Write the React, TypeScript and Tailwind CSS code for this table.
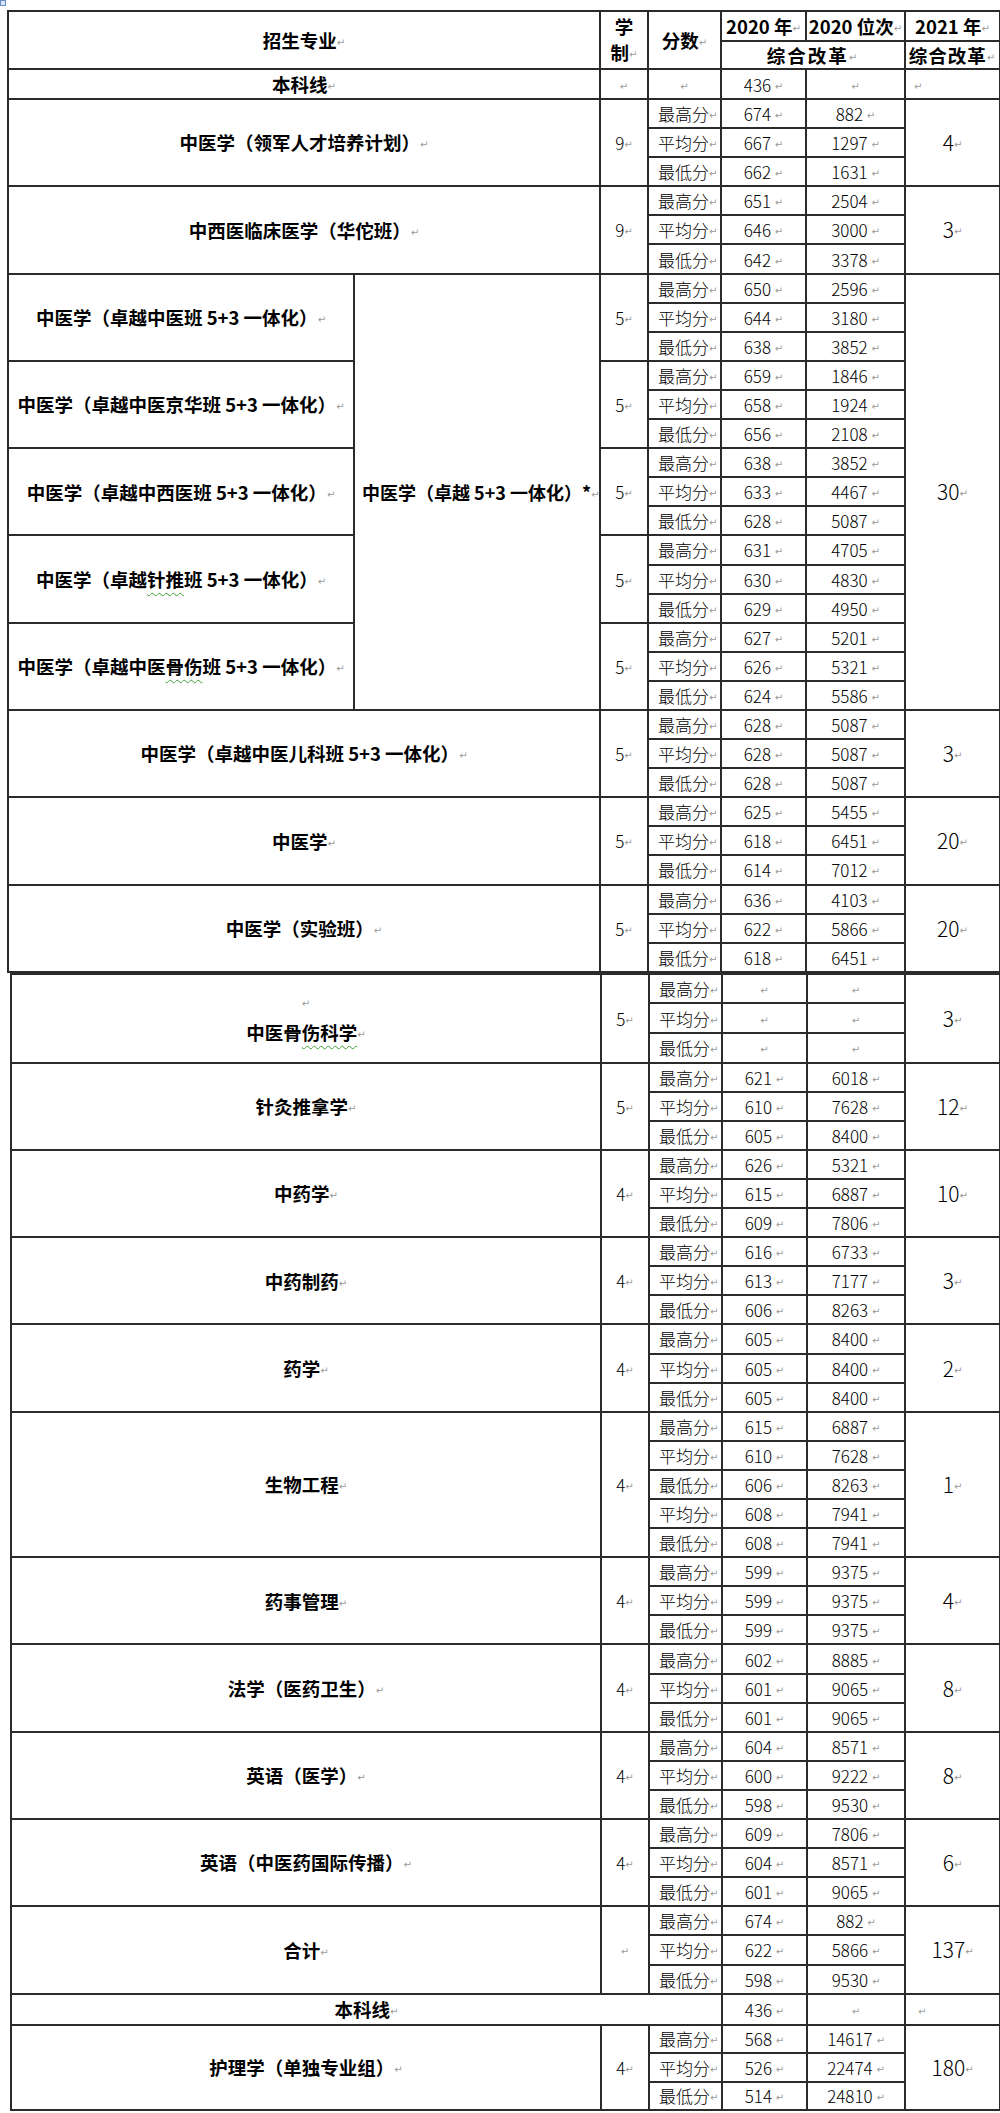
import React from 'react'

type Sub = [string, string, string]

interface Group {
  name: React.ReactNode
  years: string
  subs: Sub[]
  plan?: string
}

const Ret = () => (
  <span className="font-['DejaVu_Sans',sans-serif] text-[10px] font-normal text-[#9a9a9a] align-middle">↵</span>
)

const Wavy = ({ children }: { children: React.ReactNode }) => (
  <span className="underline decoration-wavy decoration-[#3f9c35] decoration-1 underline-offset-[5px]">{children}</span>
)

const td = 'border-2 border-[#2b2b2b] p-0 align-middle'
const head = "text-[18.5px] font-bold text-black whitespace-nowrap"
const data = 'text-[17px] font-light'

const same = (a: string, b: string): Sub[] => [
  ['最高分', a, b],
  ['平均分', a, b],
  ['最低分', a, b],
]

const firstGroups: Group[] = [
  {
    name: '中医学（领军人才培养计划）',
    years: '9',
    subs: [['最高分', '674', '882'], ['平均分', '667', '1297'], ['最低分', '662', '1631']],
    plan: '4',
  },
  {
    name: '中西医临床医学（华佗班）',
    years: '9',
    subs: [['最高分', '651', '2504'], ['平均分', '646', '3000'], ['最低分', '642', '3378']],
    plan: '3',
  },
]

const eliteGroups: Group[] = [
  {
    name: '中医学（卓越中医班 5+3 一体化）',
    years: '5',
    subs: [['最高分', '650', '2596'], ['平均分', '644', '3180'], ['最低分', '638', '3852']],
  },
  {
    name: '中医学（卓越中医京华班 5+3 一体化）',
    years: '5',
    subs: [['最高分', '659', '1846'], ['平均分', '658', '1924'], ['最低分', '656', '2108']],
  },
  {
    name: '中医学（卓越中西医班 5+3 一体化）',
    years: '5',
    subs: [['最高分', '638', '3852'], ['平均分', '633', '4467'], ['最低分', '628', '5087']],
  },
  {
    name: <>中医学（卓越<Wavy>针推</Wavy>班 5+3 一体化）</>,
    years: '5',
    subs: [['最高分', '631', '4705'], ['平均分', '630', '4830'], ['最低分', '629', '4950']],
  },
  {
    name: <>中医学（卓越中医<Wavy>骨伤</Wavy>班 5+3 一体化）</>,
    years: '5',
    subs: [['最高分', '627', '5201'], ['平均分', '626', '5321'], ['最低分', '624', '5586']],
  },
]

const laterGroups: Group[] = [
  {
    name: '中医学（卓越中医儿科班 5+3 一体化）',
    years: '5',
    subs: same('628', '5087'),
    plan: '3',
  },
  {
    name: '中医学',
    years: '5',
    subs: [['最高分', '625', '5455'], ['平均分', '618', '6451'], ['最低分', '614', '7012']],
    plan: '20',
  },
  {
    name: '中医学（实验班）',
    years: '5',
    subs: [['最高分', '636', '4103'], ['平均分', '622', '5866'], ['最低分', '618', '6451']],
    plan: '20',
  },
]

const secondGroups: Group[] = [
  {
    name: '针灸推拿学',
    years: '5',
    subs: [['最高分', '621', '6018'], ['平均分', '610', '7628'], ['最低分', '605', '8400']],
    plan: '12',
  },
  {
    name: '中药学',
    years: '4',
    subs: [['最高分', '626', '5321'], ['平均分', '615', '6887'], ['最低分', '609', '7806']],
    plan: '10',
  },
  {
    name: '中药制药',
    years: '4',
    subs: [['最高分', '616', '6733'], ['平均分', '613', '7177'], ['最低分', '606', '8263']],
    plan: '3',
  },
  { name: '药学', years: '4', subs: same('605', '8400'), plan: '2' },
  {
    name: '生物工程',
    years: '4',
    subs: [
      ['最高分', '615', '6887'],
      ['平均分', '610', '7628'],
      ['最低分', '606', '8263'],
      ['平均分', '608', '7941'],
      ['最低分', '608', '7941'],
    ],
    plan: '1',
  },
  { name: '药事管理', years: '4', subs: same('599', '9375'), plan: '4' },
  {
    name: '法学（医药卫生）',
    years: '4',
    subs: [['最高分', '602', '8885'], ['平均分', '601', '9065'], ['最低分', '601', '9065']],
    plan: '8',
  },
  {
    name: '英语（医学）',
    years: '4',
    subs: [['最高分', '604', '8571'], ['平均分', '600', '9222'], ['最低分', '598', '9530']],
    plan: '8',
  },
  {
    name: '英语（中医药国际传播）',
    years: '4',
    subs: [['最高分', '609', '7806'], ['平均分', '604', '8571'], ['最低分', '601', '9065']],
    plan: '6',
  },
  {
    name: '合计',
    years: '',
    subs: [['最高分', '674', '882'], ['平均分', '622', '5866'], ['最低分', '598', '9530']],
    plan: '137',
  },
]

function SubCells({ sub }: { sub: Sub }) {
  return (
    <>
      <td className={`${td} pl-[9px] text-left ${data} whitespace-nowrap overflow-hidden`}>
        {sub[0]}
        <Ret />
      </td>
      <td className={`${td} text-center ${data} whitespace-nowrap`}>
        {sub[1] ? <>{sub[1]} </> : null}
        <Ret />
      </td>
      <td className={`${td} text-center ${data} whitespace-nowrap`}>
        {sub[2] ? <>{sub[2]} </> : null}
        <Ret />
      </td>
    </>
  )
}

function YearsCell({ years, span }: { years: string; span: number }) {
  return (
    <td rowSpan={span} className={`${td} text-center ${data}`}>
      {years}
      <Ret />
    </td>
  )
}

function PlanCell({ plan, span }: { plan: string; span: number }) {
  return (
    <td rowSpan={span} className={`${td} text-center text-[21px] font-light`}>
      {plan}
      <Ret />
    </td>
  )
}

function WideGroup({ g, nameSpan, rowH }: { g: Group; nameSpan: number; rowH: string }) {
  const n = g.subs.length
  return (
    <>
      {g.subs.map((s, i) => (
        <tr key={i} className={rowH}>
          {i === 0 && (
            <>
              <td colSpan={nameSpan} rowSpan={n} className={`${td} text-center ${head}`}>
                {g.name}
                <Ret />
              </td>
              <YearsCell years={g.years} span={n} />
            </>
          )}
          <SubCells sub={s} />
          {i === 0 && <PlanCell plan={g.plan ?? ''} span={n} />}
        </tr>
      ))}
    </>
  )
}

export default function App() {
  return (
    <div className="relative w-[1000px] bg-white pt-[10px] pb-[5px] font-['Noto_Sans_CJK_SC',sans-serif] text-black leading-none">
      <div className="absolute left-0 top-0 h-[6px] w-[6px] border border-[#6a8cc4] bg-[#dbe6f6]" />

      <table className="ml-[7px] w-[992px] table-fixed border-collapse">
        <colgroup>
          <col className="w-[346px]" />
          <col className="w-[246px]" />
          <col className="w-[48px]" />
          <col className="w-[73px]" />
          <col className="w-[85px]" />
          <col className="w-[99px]" />
          <col className="w-[95px]" />
        </colgroup>
        <tbody>
          <tr className="h-[30px]">
            <td colSpan={2} rowSpan={2} className={`${td} text-center ${head}`}>
              招生专业
              <Ret />
            </td>
            <td rowSpan={2} className={`${td} text-center ${head} leading-[26px]`}>
              学<br />制<Ret />
            </td>
            <td rowSpan={2} className={`${td} text-center ${head}`}>
              分数
              <Ret />
            </td>
            <td className={`${td} text-center ${head}`}>
              2020 年<Ret />
            </td>
            <td className={`${td} text-center ${head}`}>
              2020 位次<Ret />
            </td>
            <td className={`${td} text-center ${head}`}>
              2021 年<Ret />
            </td>
          </tr>
          <tr className="h-[28px]">
            <td colSpan={2} className={`${td} text-center ${head} tracking-[2px]`}>
              综合改革
              <Ret />
            </td>
            <td className={`${td} text-center ${head} tracking-[1px]`}>
              综合改革
              <Ret />
            </td>
          </tr>
          <tr className="h-[30px]">
            <td colSpan={2} className={`${td} text-center ${head}`}>
              本科线
              <Ret />
            </td>
            <td className={`${td} text-center`}>
              <Ret />
            </td>
            <td className={`${td} text-center`}>
              <Ret />
            </td>
            <td className={`${td} text-center ${data}`}>
              436 <Ret />
            </td>
            <td className={`${td} text-center`}>
              <Ret />
            </td>
            <td className={`${td} pl-[8px] text-left`}>
              <Ret />
            </td>
          </tr>

          {firstGroups.map((g, i) => (
            <WideGroup key={i} g={g} nameSpan={2} rowH="h-[29.1px]" />
          ))}

          {eliteGroups.map((g, gi) =>
            g.subs.map((s, i) => (
              <tr key={`${gi}-${i}`} className="h-[29.1px]">
                {i === 0 && (
                  <td rowSpan={3} className={`${td} text-center ${head}`}>
                    {g.name}
                    <Ret />
                  </td>
                )}
                {gi === 0 && i === 0 && (
                  <td rowSpan={15} className={`${td} pl-[7px] text-left text-[18px] font-bold whitespace-nowrap overflow-hidden`}>
                    中医学（卓越 5+3 一体化）*
                    <Ret />
                  </td>
                )}
                {i === 0 && <YearsCell years={g.years} span={3} />}
                <SubCells sub={s} />
                {gi === 0 && i === 0 && <PlanCell plan="30" span={15} />}
              </tr>
            ))
          )}

          {laterGroups.map((g, i) => (
            <WideGroup key={i} g={g} nameSpan={2} rowH="h-[29.1px]" />
          ))}
        </tbody>
      </table>

      <table className="ml-[10px] w-[989px] table-fixed border-collapse">
        <colgroup>
          <col className="w-[590px]" />
          <col className="w-[48px]" />
          <col className="w-[73px]" />
          <col className="w-[85px]" />
          <col className="w-[98px]" />
          <col className="w-[95px]" />
        </colgroup>
        <tbody>
          {same('', '').map((s, i) => (
            <tr key={i} className="h-[29.6px]">
              {i === 0 && (
                <>
                  <td rowSpan={3} className={`${td} text-center ${head} leading-[28px]`}>
                    <Ret />
                    <br />
                    中医骨<Wavy>伤科学</Wavy>
                    <Ret />
                  </td>
                  <YearsCell years="5" span={3} />
                </>
              )}
              <SubCells sub={s} />
              {i === 0 && <PlanCell plan="3" span={3} />}
            </tr>
          ))}

          {secondGroups.map((g, i) => (
            <WideGroup key={i} g={g} nameSpan={1} rowH="h-[29.1px]" />
          ))}

          <tr className="h-[31px]">
            <td colSpan={3} className={`${td} text-center ${head}`}>
              本科线
              <Ret />
            </td>
            <td className={`${td} text-center ${data}`}>
              436 <Ret />
            </td>
            <td className={`${td} text-center`}>
              <Ret />
            </td>
            <td className={`${td} pl-[12px] text-left`}>
              <Ret />
            </td>
          </tr>

          <WideGroup
            g={{
              name: '护理学（单独专业组）',
              years: '4',
              subs: [['最高分', '568', '14617'], ['平均分', '526', '22474'], ['最低分', '514', '24810']],
              plan: '180',
            }}
            nameSpan={1}
            rowH="h-[28.5px]"
          />
        </tbody>
      </table>
    </div>
  )
}
